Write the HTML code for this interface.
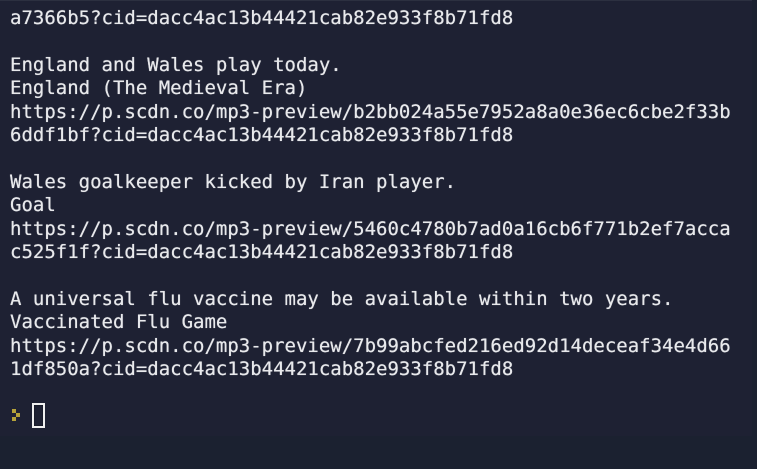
<!DOCTYPE html>
<html><head><style>
html,body{margin:0;padding:0;width:757px;height:469px;overflow:hidden;background:#1b2130;}
.term{position:absolute;left:0;top:0;width:752px;height:435px;background:#1e2133;border-top:1px solid #2c3040;}
pre{position:absolute;left:10px;top:7px;margin:0;font-family:"DejaVu Sans Mono","Liberation Mono",monospace;font-size:19px;line-height:23.4px;color:#e8e9ec;text-shadow:0 0 0.6px #e8e9ec;}
.p{position:absolute;left:12px;top:409px;width:8px;height:12px;}
.cur{position:absolute;left:32px;top:403px;width:13px;height:25px;border:2px solid #f0f0f0;box-sizing:border-box;box-shadow:0 0 1px #000 inset;}
</style></head><body>
<div class="term"></div>
<pre>a7366b5?cid=dacc4ac13b44421cab82e933f8b71fd8

England and Wales play today.
England (The Medieval Era)
https://p.scdn.co/mp3-preview/b2bb024a55e7952a8a0e36ec6cbe2f33b
6ddf1bf?cid=dacc4ac13b44421cab82e933f8b71fd8

Wales goalkeeper kicked by Iran player.
Goal
https://p.scdn.co/mp3-preview/5460c4780b7ad0a16cb6f771b2ef7acca
c525f1f?cid=dacc4ac13b44421cab82e933f8b71fd8

A universal flu vaccine may be available within two years.
Vaccinated Flu Game
https://p.scdn.co/mp3-preview/7b99abcfed216ed92d14deceaf34e4d66
1df850a?cid=dacc4ac13b44421cab82e933f8b71fd8
</pre>
<svg class="p" viewBox="0 0 8 12"><rect x="0" y="0" width="4" height="4" fill="#b5a23a"/><rect x="4" y="4" width="4" height="4" fill="#b5a23a"/><rect x="0" y="8" width="4" height="4" fill="#b5a23a"/></svg>
<div class="cur"></div>
</body></html>
